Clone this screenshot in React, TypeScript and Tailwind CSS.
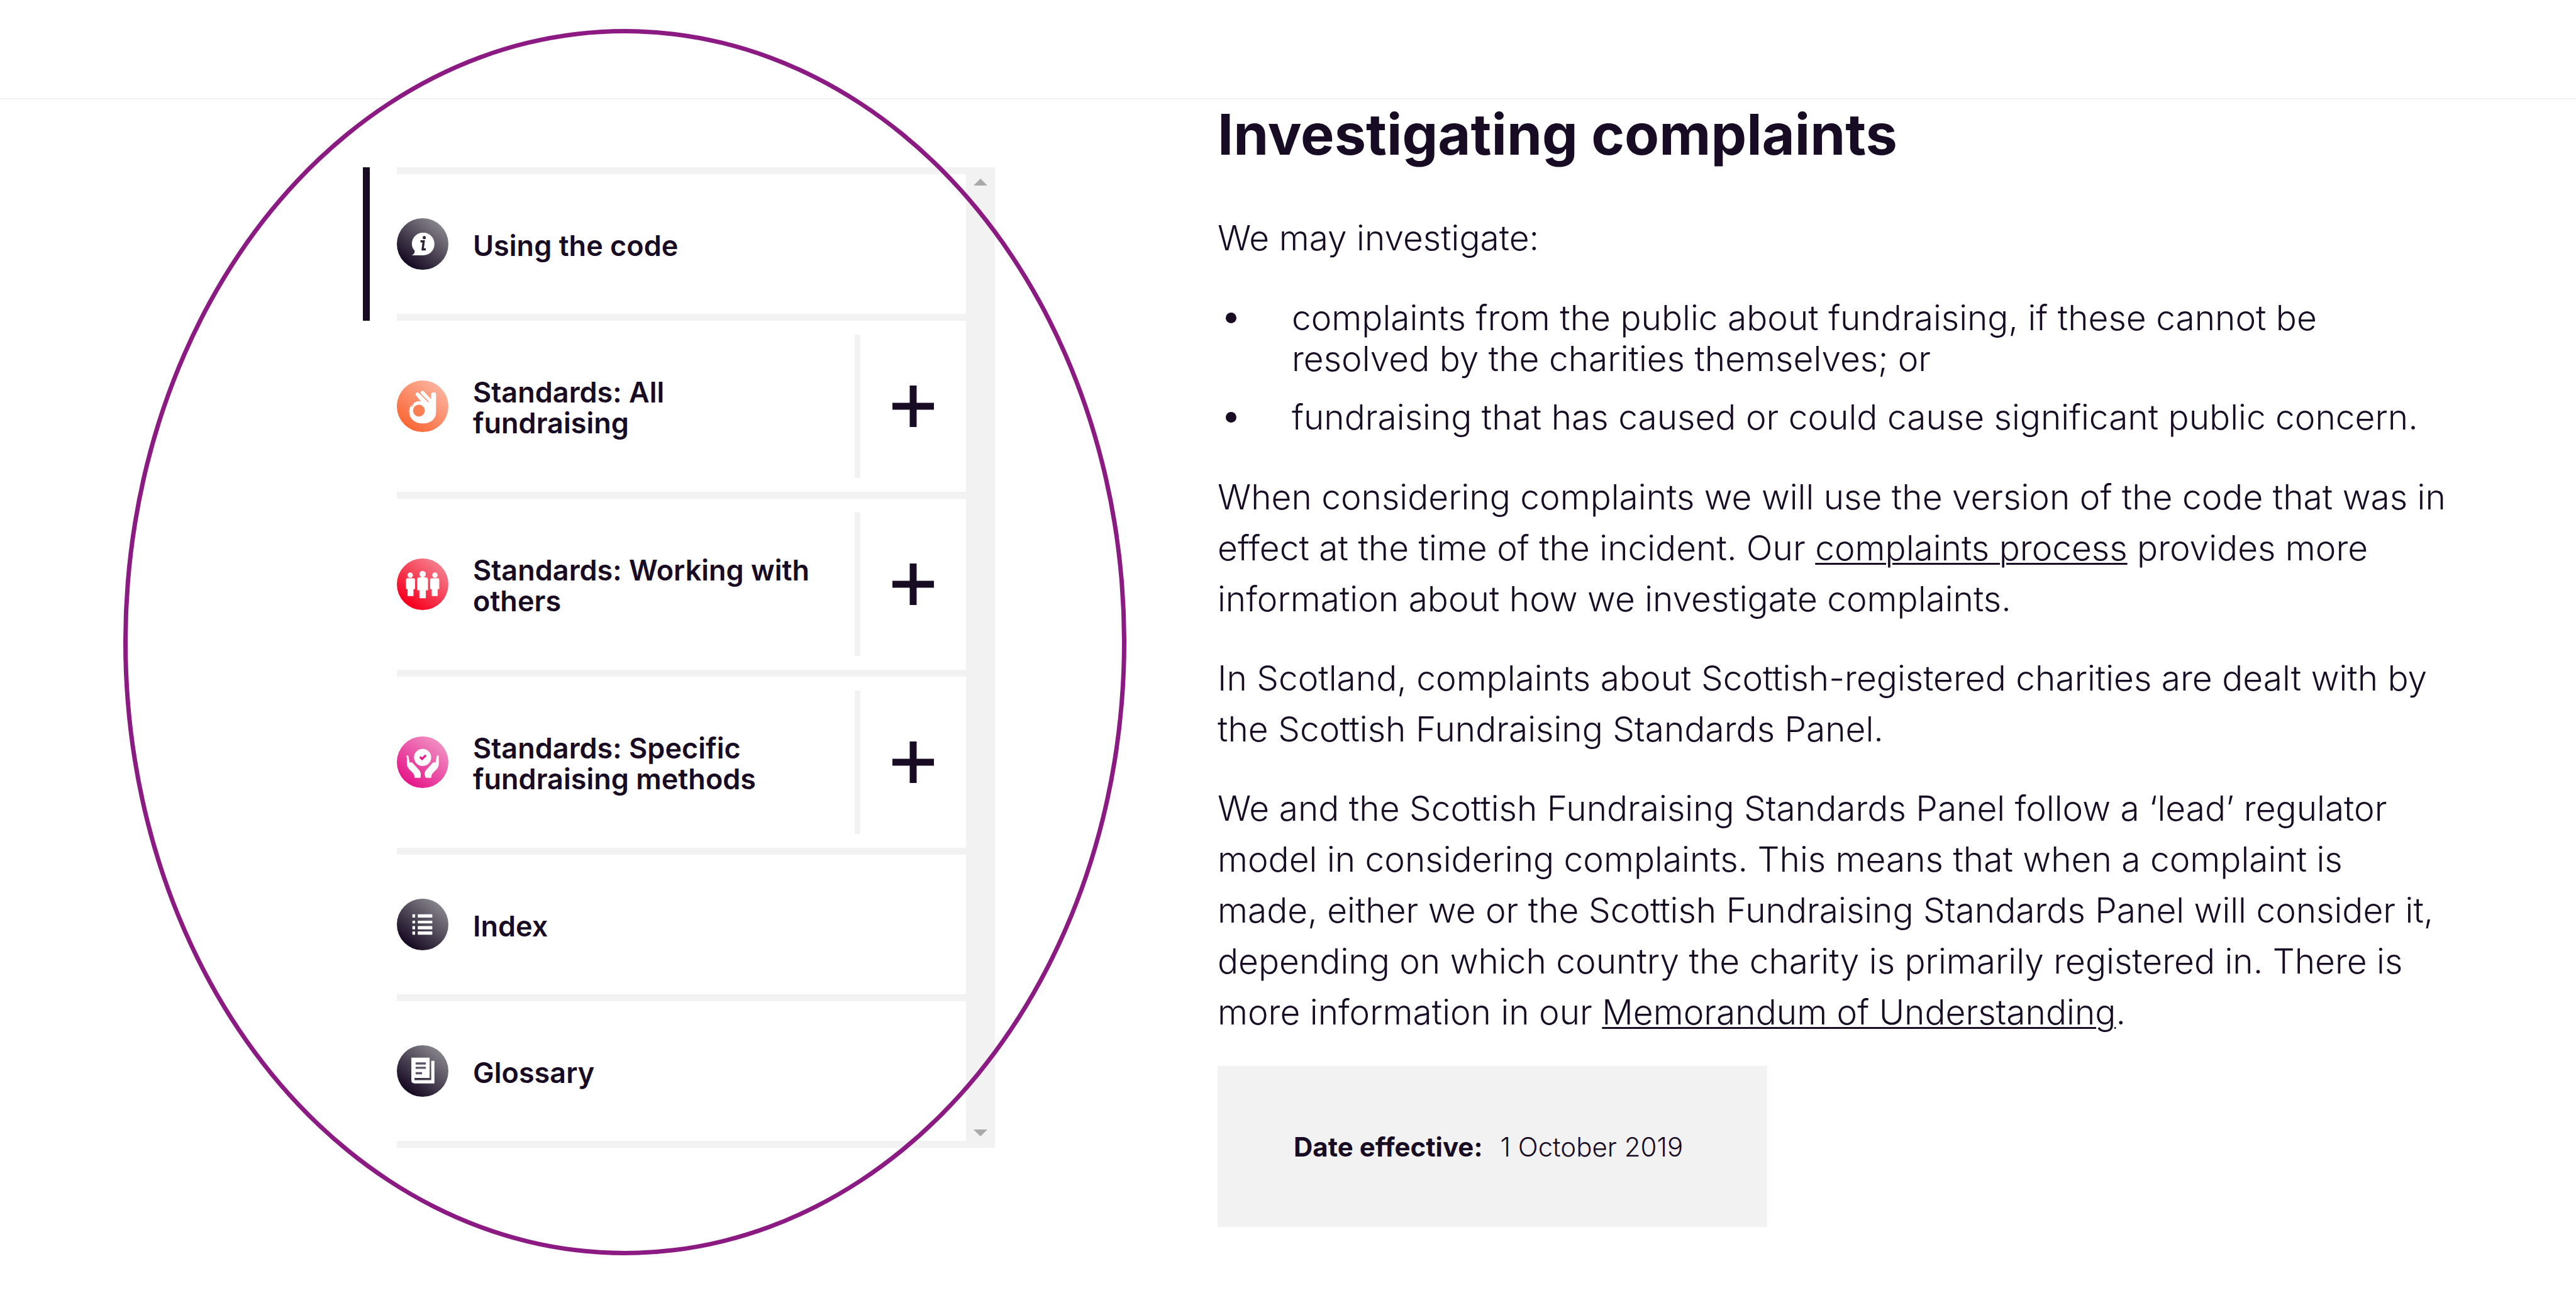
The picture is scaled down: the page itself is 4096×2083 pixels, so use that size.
import React from 'react';

type IconProps = { id: string; from: string; to: string; children: React.ReactNode };

/** Round gradient badge that every menu entry starts with */
const Badge: React.FC<IconProps> = ({ id, from, to, children }) => (
  <svg viewBox="0 0 96 96" className="w-[82px] h-[82px] shrink-0" aria-hidden="true">
    <defs>
      <linearGradient id={id} x1="0.25" y1="0.9" x2="0.85" y2="0.15">
        <stop offset="0" stopColor={from} />
        <stop offset="1" stopColor={to} />
      </linearGradient>
    </defs>
    <circle cx="48" cy="48" r="48" fill={`url(#${id})`} />
    {children}
  </svg>
);

const InfoIcon = () => (
  <Badge id="info" from="#180c24" to="#85828a">
    <path d="M49 27c12 0 21 9 21 21s-9 21-21 21H28c4-2 6-5 5-9-3-3-5-7-5-12 0-12 9-21 21-21z" fill="#fff" />
    <circle cx="51" cy="36" r="3" fill="#2c2236" />
    <path d="M44 43h6l-2 15h6" fill="none" stroke="#2c2236" strokeWidth="4" />
  </Badge>
);

const OkHandIcon = () => (
  <Badge id="ok" from="#fb6a38" to="#fbb09b">
    <path
      d="M30 43c4-3 9-5 15-4L35 27c-1-4 3-6 6-4l4 4c-3-7 3-10 6-6l13 14V25c1-4 8-4 9 0v34c0 13-11 21-25 21-15 0-25-9-25-22 0-6 2-11 7-15z"
      fill="#fff"
    />
    <circle cx="41" cy="56" r="11" fill="#fb7f55" />
    <path d="M42 23l17 17M31 43l-4 6" stroke="#fb9a7a" strokeWidth="2" fill="none" />
  </Badge>
);

const PeopleIcon = () => (
  <Badge id="people" from="#f7001e" to="#f57c8a">
    <g fill="#fff">
      <circle cx="25" cy="31" r="5" />
      <path d="M19 37h12q3 0 3 4v16h-3v13H20V57h-3V41q0-4 2-4z" />
      <circle cx="71" cy="31" r="5" />
      <path d="M65 37h12q2 0 2 4v16h-3v13H65V57h-3V41q0-4 3-4z" />
      <circle cx="48" cy="29" r="6" />
      <path d="M42 35h12q4 0 4 5v19h-4v15H42V59h-4V40q0-5 4-5z" />
    </g>
  </Badge>
);

const HandsIcon = () => (
  <Badge id="hands" from="#e51a8b" to="#f08cc2">
    <g fill="#fff">
      <circle cx="48" cy="39" r="16" />
      <path d="M18 36c2-2 4 0 4 3l2 10c2-2 4-1 6 1l11 12c4 4 4 9 3 15H33c0-4-1-7-4-10l-7-7c-3-4-4-10-3-18z" />
      <path d="M78 36c-2-2-4 0-4 3l-2 10c-2-2-4-1-6 1L55 62c-4 4-4 9-1 15h10c0-4 1-7 4-10l7-7c3-4 4-10 3-18z" />
    </g>
    <path d="M43 38l4 4 7-7" fill="none" stroke="#e51a8b" strokeWidth="4" />
  </Badge>
);

const ListIcon = () => (
  <Badge id="list" from="#180c24" to="#85828a">
    <g fill="#fff">
      <path d="M29 29h5v6h-5zM29 41h5v5h-5zM29 51h5v6h-5zM29 61h5v6h-5z" />
      <path d="M39 29h27v6H39zM39 41h27v5H39zM39 51h27v6H39zM39 61h27v6H39z" />
    </g>
  </Badge>
);

const BookIcon = () => (
  <Badge id="book" from="#180c24" to="#85828a">
    <path d="M27 23h34v38H33v4h31V29h6v42H33q-6 0-6-6z" fill="#fff" />
    <path d="M35 34h19M35 42h19M35 52h12" stroke="#5d5567" strokeWidth="4" fill="none" />
  </Badge>
);

const menuItems = [
  { title: ['Using the code'], icon: <InfoIcon />, active: true },
  { title: ['Standards: All', 'fundraising'], icon: <OkHandIcon />, expandable: true },
  { title: ['Standards: Working with', 'others'], icon: <PeopleIcon />, expandable: true },
  { title: ['Standards: Specific', 'fundraising methods'], icon: <HandsIcon />, expandable: true },
  { title: ['Index'], icon: <ListIcon /> },
  { title: ['Glossary'], icon: <BookIcon /> },
];

// Puts a line break between the parts of a text
const Lines: React.FC<{ lines: string[] }> = ({ lines }) => (
  <>
    {lines.map((line, i) => (
      <React.Fragment key={line}>
        {i > 0 && <br />}
        {line}
      </React.Fragment>
    ))}
  </>
);

const CodeMenu = () => (
  <nav className="flex" aria-label="Code of practice">
    <ul className="flex-1 border-t-[11px] border-[#f2f2f2] ml-[54px]">
      {menuItems.map((item) => (
        <li
          key={item.title[0]}
          className={`relative flex border-b-[11px] border-[#f2f2f2] ${item.expandable ? 'h-[283px]' : 'h-[233px]'}`}
        >
          {item.active && <span className="absolute -left-[54px] -top-[11px] -bottom-[11px] w-[11px] bg-[#180c24]" />}
          <a href="#" className="flex flex-1 items-center gap-[39px]">
            {item.icon}
            <span className="pt-1 text-[45px] leading-[49px] font-semibold whitespace-nowrap">
              <Lines lines={item.title} />
            </span>
          </a>
          {item.expandable && (
            <button
              type="button"
              aria-label={`Expand ${item.title.join(' ')}`}
              className="my-[22px] flex w-[177px] items-center justify-center border-l-[9px] border-[#f2f2f2]"
            >
              <svg viewBox="0 0 66 66" className="w-[66px] h-[66px]">
                <path d="M33 0v66M0 33h66" stroke="#180c24" strokeWidth="11" />
              </svg>
            </button>
          )}
        </li>
      ))}
    </ul>
    <div className="flex w-[46px] flex-col items-center justify-between bg-[#f2f2f2] py-[18px]">
      <svg viewBox="0 0 22 11" className="w-[22px] h-[11px]">
        <path d="M11 0l11 11H0z" fill="#a9a9a9" />
      </svg>
      <svg viewBox="0 0 22 11" className="w-[22px] h-[11px]">
        <path d="M11 11L0 0h22z" fill="#a9a9a9" />
      </svg>
    </div>
  </nav>
);

const Article = () => (
  <article className="text-[55px] font-light leading-[81px] whitespace-nowrap">
    <h1 className="text-[90px] font-bold leading-[100px]">Investigating complaints</h1>
    <p className="mt-[74px]">We may investigate:</p>
    <ul className="mt-[54px] flex flex-col gap-7 leading-[65px]">
      <li className="flex gap-[88px] pl-[13px]">
        <span className="mt-6 h-[17px] w-[17px] shrink-0 rounded-full bg-[#180c24]" />
        <span>
          <Lines lines={['complaints from the public about fundraising, if these cannot be', 'resolved by the charities themselves; or']} />
        </span>
      </li>
      <li className="flex gap-[88px] pl-[13px]">
        <span className="mt-6 h-[17px] w-[17px] shrink-0 rounded-full bg-[#180c24]" />
        <span>fundraising that has caused or could cause significant public concern.</span>
      </li>
    </ul>
    <p className="mt-[54px]">
      When considering complaints we will use the version of the code that was in
      <br />
      effect at the time of the incident. Our{' '}
      <a href="#" className="underline decoration-[3px] underline-offset-[4px]">complaints process</a> provides more
      <br />
      information about how we investigate complaints.
    </p>
    <p className="mt-[45px]">
      In Scotland, complaints about Scottish-registered charities are dealt with by
      <br />
      the Scottish Fundraising Standards Panel.
    </p>
    <p className="mt-[45px]">
      We and the Scottish Fundraising Standards Panel follow a ‘lead’ regulator
      <br />
      model in considering complaints. This means that when a complaint is
      <br />
      made, either we or the Scottish Fundraising Standards Panel will consider it,
      <br />
      depending on which country the charity is primarily registered in. There is
      <br />
      more information in our{' '}
      <a href="#" className="underline decoration-[3px] underline-offset-[4px]">Memorandum of Understanding</a>.
    </p>
    <div className="mt-[45px] inline-flex h-64 w-[874px] items-center gap-7 bg-[#f2f2f2] px-[121px] text-[42px]">
      <strong className="font-bold">Date effective:</strong>
      <span>1 October 2019</span>
    </div>
  </article>
);

export default function App() {
  return (
    <div className="min-h-screen overflow-hidden bg-white font-['Inter',sans-serif] text-[#180c24] [font-optical-sizing:none]">
      <header className="h-[158px] border-b-2 border-[#f2f2f2]" />
      <main className="grid grid-cols-[1936fr_2160fr]">
        <div className="relative pt-[108px] pr-[354px] pl-[577px]">
          <CodeMenu />
          <div className="pointer-events-none absolute -top-[112px] left-[196px] h-[1950px] w-[1595px] rounded-[50%] border-[7px] border-[#8b1a82]" />
        </div>
        <div className="pt-[6px]">
          <Article />
        </div>
      </main>
    </div>
  );
}
